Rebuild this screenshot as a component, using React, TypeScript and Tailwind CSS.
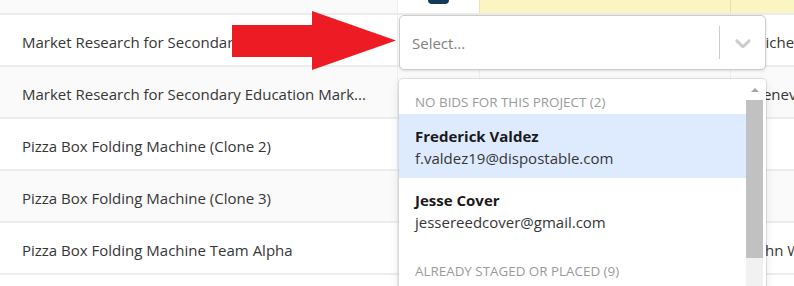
import React from "react";

const rows = [
  { name: "Market Research for Secondary Education Mark...", owner: "Michelle Reyes", bg: "bg-white" },
  { name: "Market Research for Secondary Education Mark...", owner: "Genevieve Park", bg: "bg-[#fafafa]" },
  { name: "Pizza Box Folding Machine (Clone 2)", owner: "", bg: "bg-white" },
  { name: "Pizza Box Folding Machine (Clone 3)", owner: "", bg: "bg-[#fafafa]" },
  { name: "Pizza Box Folding Machine Team Alpha", owner: "John Walsh", bg: "bg-white" },
  { name: "", owner: "", bg: "bg-white" },
];

const options = [
  { name: "Frederick Valdez", email: "f.valdez19@dispostable.com", active: true },
  { name: "Jesse Cover", email: "jessereedcover@gmail.com", active: false },
];

function Chevron() {
  return (
    <svg width="26" height="26" viewBox="0 0 20 20" fill="#cccccc">
      <path d="M4.516 7.548c0.436-0.446 1.043-0.481 1.576 0l3.908 3.747 3.908-3.747c0.533-0.481 1.141-0.446 1.574 0 0.436 0.445 0.408 1.197 0 1.615-0.406 0.418-4.695 4.502-4.695 4.502-0.217 0.223-0.502 0.335-0.787 0.335s-0.57-0.112-0.789-0.335c0 0-4.287-4.084-4.695-4.502s-0.436-1.17 0-1.615z" />
    </svg>
  );
}

function GroupHeading({ label }: { label: string }) {
  return (
    <div className="h-[23px] px-4 text-[13.4px] font-medium uppercase leading-[23px] text-[#9a9a9a]">
      {label}
    </div>
  );
}

export default function App() {
  return (
    <div
      className="relative h-[286px] w-[794px] overflow-hidden bg-white text-[#363636]"
      style={{ fontFamily: '"Open Sans", "Noto Sans", sans-serif' }}
    >
      {/* table underneath */}
      <div className="flex flex-col">
        <div className="grid h-[15px] grid-cols-[397px_82px_251px_1fr] border-b-2 border-[#ececec]">
          <div className="bg-[#fafafa]" />
          <div className="flex justify-center border-l border-[#eeeeee] bg-white">
            <div className="h-[4px] w-[21px] rounded-b-[4px] bg-[#123a5a]" />
          </div>
          <div className="border-l border-[#ebe5b4] bg-[#fbf5c2]" />
          <div className="border-l border-[#e6e0ae] bg-[#fbf5c2]" />
        </div>
        {rows.map((r, i) => (
          <div
            key={i}
            className={`grid h-[52px] grid-cols-[397px_82px_251px_1fr] border-b-2 border-[#ececec] ${r.bg}`}
          >
            <div className="flex items-center overflow-hidden whitespace-nowrap pt-[4px] pl-[22px] text-[15px]">{r.name}</div>
            <div className="border-l border-[#eeeeee]" />
            <div className="border-l border-[#eeeeee]" />
            <div className="flex items-center overflow-hidden whitespace-nowrap border-l border-[#eeeeee] pt-[4px] pl-[21px] text-[15px]">
              {r.owner}
            </div>
          </div>
        ))}
      </div>

      {/* red callout arrow */}
      <svg className="absolute left-[232px] top-[11px]" width="166" height="60" viewBox="0 0 166 60">
        <polygon points="0,14 80,14 80,0 164,29.5 80,59 80,46 0,46" fill="#ed1c24" />
      </svg>

      {/* select control */}
      <div className="absolute left-[399px] top-[15px] flex h-[55px] w-[367px] items-center rounded-[5px] border border-[#cccccc] bg-white shadow-[0_1px_3px_rgba(0,0,0,0.12)]">
        <div className="flex-1 pt-[2px] pl-[12px] text-[15px] text-[#808080]">Select...</div>
        <div className="h-[33px] w-px bg-[#cccccc]" />
        <div className="flex w-[45px] items-center justify-center">
          <Chevron />
        </div>
      </div>

      {/* menu */}
      <div className="absolute left-[399px] top-[79px] flex h-[230px] w-[367px] overflow-hidden rounded-[4px] bg-white shadow-[0_0_0_1px_rgba(0,0,0,0.1),0_4px_11px_rgba(0,0,0,0.1)]">
        <div className="flex-1 pt-[4px]">
          <div className="pt-2 pb-2">
            <GroupHeading label="No bids for this project (2)" />
            {options.map((o) => (
              <div
                key={o.email}
                className={`px-4 pt-[11px] pb-[9px] text-[15px] leading-[22px] ${o.active ? "bg-[#deebff]" : ""}`}
              >
                <div className="font-bold text-[#1a1a1a]">{o.name}</div>
                <div>{o.email}</div>
              </div>
            ))}
          </div>
          <div className="pt-[10px]">
            <GroupHeading label="Already staged or placed (9)" />
          </div>
        </div>
        <div className="flex w-[20px] flex-col pr-[3px]">
          <div className="flex h-[21px] items-center justify-center">
            <div className="h-0 w-0 border-x-[4px] border-b-[4px] border-x-transparent border-b-[#a3a3a3]" />
          </div>
          <div className="h-[158px] bg-[#c1c1c1]" />
          <div className="flex-1 bg-[#f1f1f1]" />
        </div>
      </div>
    </div>
  );
}
